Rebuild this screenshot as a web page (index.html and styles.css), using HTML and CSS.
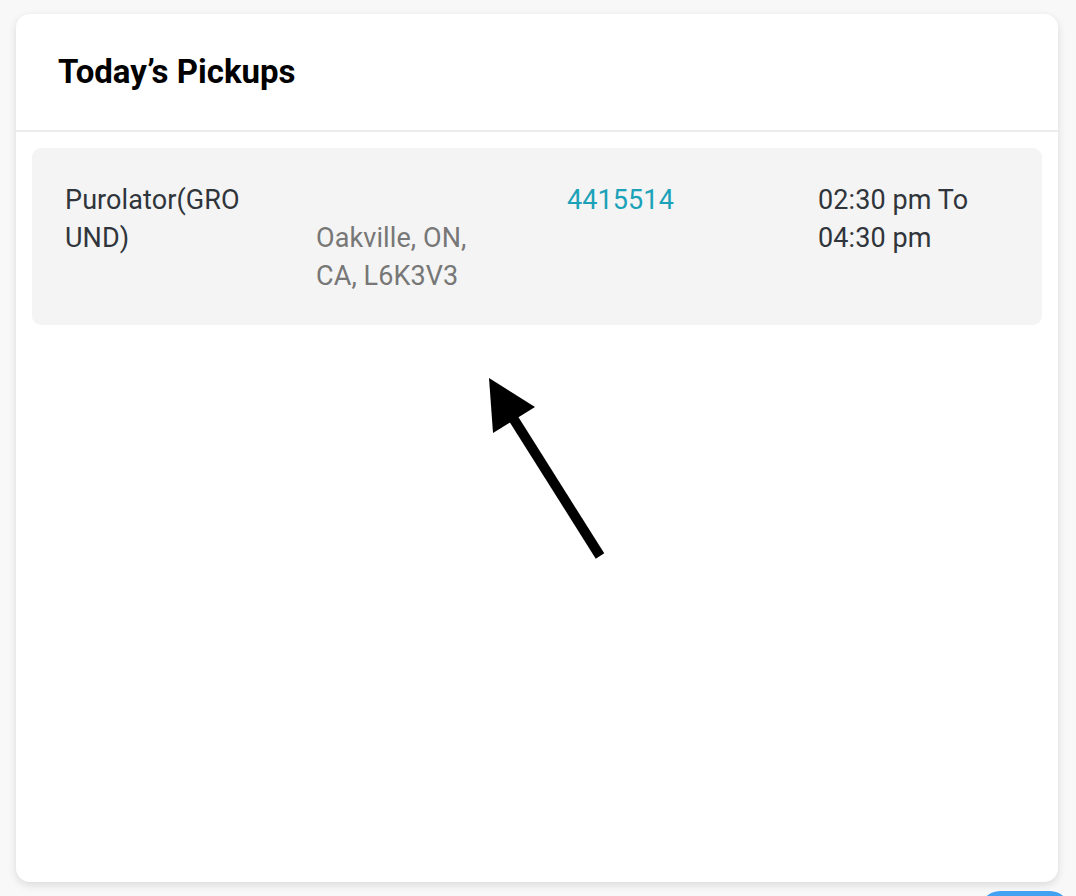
FILE: index.html
```html
<!DOCTYPE html>
<html>
<head>
<meta charset="utf-8">
<link rel="stylesheet" href="styles.css">
</head>
<body>
<div class="card">
  <div class="card-header">
    <h2 class="title">Today’s Pickups</h2>
  </div>
  <div class="card-body">
    <div class="pickup-row">
      <div class="cell carrier">Purolator(GROUND)</div>
      <div class="cell address"><span class="blank">&nbsp;</span>Oakville, ON, CA, L6K3V3</div>
      <div class="cell number">4415514</div>
      <div class="cell time">02:30 pm To 04:30 pm</div>
    </div>
  </div>
</div>
<svg class="arrow" width="140" height="200" viewBox="0 0 140 200">
  <line x1="130" y1="178" x2="38" y2="32" stroke="#000" stroke-width="10"/>
  <polygon points="19,0 23,55 65,29" fill="#000"/>
</svg>
<div class="fab"></div>
</body>
</html>
```
FILE: styles.css
```css
html, body {
  margin: 0;
  padding: 0;
}
body {
  background: #f8f8f8;
  font-family: Roboto, "Liberation Sans", sans-serif;
  width: 1076px;
  height: 896px;
  overflow: hidden;
  position: relative;
}
.card {
  margin: 14px 0 0 16px;
  width: 1042px;
  height: 868px;
  background: #fff;
  border-radius: 14px;
  box-shadow: 0 3px 8px rgba(0,0,0,0.12);
  box-sizing: border-box;
}
.card-header {
  height: 118px;
  border-bottom: 2px solid #ececec;
  display: flex;
  align-items: center;
  padding-left: 42px;
  padding-bottom: 2px;
  box-sizing: border-box;
}
.title {
  margin: 0;
  font-size: 33px;
  font-weight: 700;
  color: #000;
}
.card-body {
  padding: 16px 16px;
}
.pickup-row {
  background: #f4f4f4;
  border-radius: 9px;
  padding: 33px 3px 30px;
  display: grid;
  grid-template-columns: repeat(4, 251px);
  font-size: 27px;
  line-height: 38px;
  letter-spacing: 0.1px;
  color: #30353b;
}
.cell {
  padding-left: 30px;
  width: 182px;
}
.carrier {
  word-break: break-all;
}
.blank {
  display: block;
}
.address {
  color: #777;
}
.number {
  color: #1ba2b8;
}
.arrow {
  position: absolute;
  left: 470px;
  top: 378px;
}
.fab {
  position: absolute;
  left: 980px;
  top: 891px;
  width: 90px;
  height: 40px;
  border-radius: 20px;
  background: #42a1f0;
}
```
